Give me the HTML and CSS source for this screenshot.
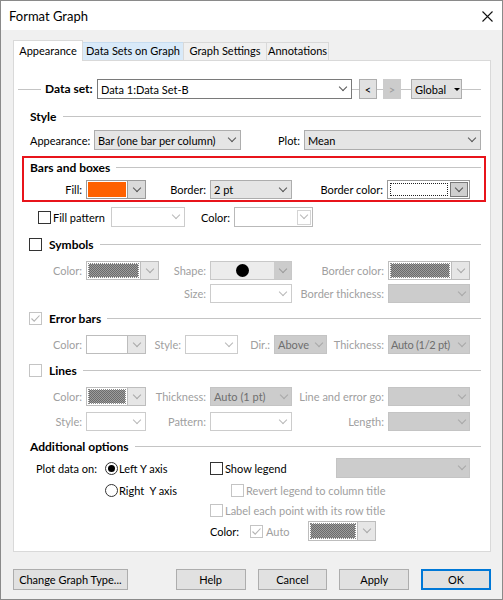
FILE: index.html
```html
<!DOCTYPE html>
<html lang="en">
<head>
    <meta charset="UTF-8">
    <title>Format Graph</title>
    <link rel="stylesheet" href="styles.css">
</head>
<body>
<div class="window">
    <div class="titlebar">
        <span class="title">Format Graph</span>
        <svg class="close" width="11" height="11" viewBox="0 0 11 11"><path d="M0.5 0.5 L10.5 10.5 M10.5 0.5 L0.5 10.5" stroke="#111" stroke-width="1.1"/></svg>
    </div>
    <div class="body">
        <div class="tabs">
            <div class="tab active t1">Appearance</div>
            <div class="tab hover t2">Data Sets on Graph</div>
            <div class="tab t3">Graph Settings</div>
            <div class="tab t4">Annotations</div>
        </div>
        <div class="panel">
            <div class="ds-row">
                <span class="ds-label">Data set:</span>
                <div class="combo edit ds-combo"><span class="val">Data 1:Data Set-B</span><span class="arr"></span></div>
                <span class="navbtn prev">&lt;</span>
                <span class="navbtn next off">&gt;</span>
                <span class="navbtn global">Global <i class="tri"></i></span>
            </div>

            <div class="group-head sp-style">Style</div>
            <div class="row sp-appear">
                <span class="lbl l-appear">Appearance:</span>
                <div class="combo list w-appear"><span class="val">Bar (one bar per column)</span><span class="arr"></span></div>
                <span class="lbl right l-plot">Plot:</span>
                <div class="combo list w-plot"><span class="val">Mean</span><span class="arr"></span></div>
            </div>

            <div class="highlight">
                <div class="group-head">Bars and boxes</div>
                <div class="row fill-row">
                    <span class="lbl right c1">Fill:</span>
                    <div class="swatch w-sm"><span class="color orange"></span><span class="sbtn"><span class="arr"></span></span></div>
                    <span class="lbl right c2">Border:</span>
                    <div class="combo list w-std"><span class="val">2 pt</span><span class="arr"></span></div>
                    <span class="lbl right c3f">Border color:</span>
                    <div class="swatch w-bc"><span class="color focus"></span><span class="sbtn dark"><span class="arr"></span></span></div>
                </div>
            </div>

            <div class="row sp-pattern">
                <span class="fp-label"><span class="check"></span><span class="fp-text">Fill pattern</span></span>
                <div class="combo blank w-fp"><span class="val"></span><span class="arr"></span></div>
                <span class="lbl right fp-color">Color:</span>
                <div class="combo blank soft w-fpc"><span class="val"></span><span class="arr boxed"></span></div>
            </div>

            <div class="group-head with-check sp-9"><span class="check"></span>Symbols</div>
            <div class="row small sp-9 muted">
                <span class="lbl right c1">Color:</span>
                <div class="swatch off w-md"><span class="color hatch"></span><span class="sbtn"><span class="arr"></span></span></div>
                <span class="lbl right c2n">Shape:</span>
                <div class="combo shape w-std"><span class="val"><i class="dot"></i></span><span class="arr grey"></span></div>
                <span class="lbl right c3">Border color:</span>
                <div class="swatch off w-std"><span class="color hatch"></span><span class="sbtn"><span class="arr"></span></span></div>
            </div>
            <div class="row small sp-4 muted">
                <span class="lbl right c-size">Size:</span>
                <div class="combo blank w-std"><span class="val"></span><span class="arr"></span></div>
                <span class="lbl right c3">Border thickness:</span>
                <div class="combo dis w-std"><span class="val"></span><span class="arr"></span></div>
            </div>

            <div class="group-head with-check sp-7"><span class="check off on"><svg width="11" height="11" viewBox="0 0 11 11"><path d="M1.5 5.5 L4.2 8.2 L9.5 2.5" fill="none" stroke="#b4b4b4" stroke-width="1.1"/></svg></span>Error bars</div>
            <div class="row small sp-9 muted">
                <span class="lbl right c1">Color:</span>
                <div class="swatch off w-sm"><span class="color"></span><span class="sbtn"><span class="arr"></span></span></div>
                <span class="lbl right e-style">Style:</span>
                <div class="combo blank w-xs"><span class="val"></span><span class="arr"></span></div>
                <span class="lbl right e-dir">Dir.:</span>
                <div class="combo dis w-xs"><span class="val">Above</span><span class="arr"></span></div>
                <span class="lbl right e-thick">Thickness:</span>
                <div class="combo dis w-std"><span class="val fit">Auto (1/2 pt)</span><span class="arr"></span></div>
            </div>

            <div class="group-head with-check sp-8"><span class="check off"></span>Lines</div>
            <div class="row small sp-9 muted">
                <span class="lbl right c1">Color:</span>
                <div class="swatch off w-sm"><span class="color hatch"></span><span class="sbtn"><span class="arr"></span></span></div>
                <span class="lbl right c2">Thickness:</span>
                <div class="combo dis w-std"><span class="val">Auto (1 pt)</span><span class="arr"></span></div>
                <span class="lbl right c3">Line and error go:</span>
                <div class="combo dis w-std"><span class="val"></span><span class="arr"></span></div>
            </div>
            <div class="row small sp-6 muted">
                <span class="lbl right c1">Style:</span>
                <div class="combo blank w-sm"><span class="val"></span><span class="arr"></span></div>
                <span class="lbl right c2">Pattern:</span>
                <div class="combo blank w-std"><span class="val"></span><span class="arr"></span></div>
                <span class="lbl right c3">Length:</span>
                <div class="combo dis w-std"><span class="val"></span><span class="arr"></span></div>
            </div>

            <div class="group-head sp-7">Additional options</div>
            <div class="row sp-4">
                <span class="lbl plot-lbl">Plot data on:</span>
                <span class="radio on"></span>
                <span class="lbl opt-left">Left Y axis</span>
                <span class="check"></span>
                <span class="lbl opt-legend">Show legend</span>
                <div class="combo dis w-legend"><span class="val"></span><span class="arr"></span></div>
            </div>
            <div class="row line sp-3">
                <span class="gap75"></span>
                <span class="radio"></span>
                <span class="lbl opt-right">Right&nbsp; Y axis</span>
                <span class="check off"></span>
                <span class="lbl opt-note muted">Revert legend to column title</span>
            </div>
            <div class="row line sp-2">
                <span class="gap180"></span>
                <span class="check off"></span>
                <span class="lbl opt-note muted">Label each point with its row title</span>
            </div>
            <div class="row sp-2">
                <span class="gap180"></span>
                <span class="lbl opt-color">Color:</span>
                <span class="check off on"><svg width="11" height="11" viewBox="0 0 11 11"><path d="M1.5 5.5 L4.2 8.2 L9.5 2.5" fill="none" stroke="#b4b4b4" stroke-width="1.1"/></svg></span>
                <span class="lbl opt-auto muted">Auto</span>
                <div class="swatch off w-auto"><span class="color hatch"></span><span class="sbtn"><span class="arr"></span></span></div>
            </div>
        </div>

        <div class="footer">
            <span class="btn change">Change Graph Type...</span>
            <span class="btn help">Help</span>
            <span class="btn">Cancel</span>
            <span class="btn">Apply</span>
            <span class="btn default">OK</span>
        </div>
    </div>
</div>
</body>
</html>
```

FILE: styles.css
```css
* { box-sizing: border-box; }
body {
    margin: 0;
    font-family: Lato, "Noto Sans", sans-serif;
    font-size: 11px;
    color: #000;
}
.window {
    width: 503px;
    height: 600px;
    border: 1px solid #8a8a8a;
    background: #f0f0f0;
}
.titlebar {
    height: 29px;
    background: #fff;
    display: flex;
    align-items: center;
    justify-content: space-between;
    padding: 0 9px 0 8px;
}
.title { font-size: 13px; }
.close { margin-top: 1px; }

.body { padding: 10px 11px 9px 12px; }

/* tabs */
.tabs { display: flex; align-items: flex-end; height: 20px; }
.tab {
    height: 18px;
    border: 1px solid #d9d9d9;
    border-bottom: none;
    background: #f0f0f0;
    line-height: 16px;
    text-align: center;
    margin-right: -1px;
}
.tab.active {
    height: 21px;
    line-height: 19px;
    background: #fff;
    margin-bottom: -1px;
    position: relative;
    z-index: 1;
}
.tab.hover { background: #d9eaf9; border-color: #c6dcf0; }
.t1 { width: 70px; }
.t2 { width: 102px; }
.t3 { width: 84px; }
.t4 { width: 63px; }

.panel {
    height: 492px;
    background: #fff;
    border: 1px solid #d9d9d9;
}

/* data set row */
.ds-row {
    display: flex;
    align-items: center;
    height: 20px;
    margin: 18px 0 0 4px;
    width: 463px;
    background: linear-gradient(#c4c4c4, #c4c4c4) center / 100% 1px no-repeat;
}
.ds-label {
    width: 56px;
    margin-left: 23px;
    padding-left: 4px;
    background: #fff;
    font-weight: bold;
    font-size: 12px;
    height: 20px;
    line-height: 20px;
}
.ds-combo { width: 255px; }
.navbtn {
    height: 20px;
    border: 1px solid #adadad;
    background: #e1e1e1;
    display: flex;
    align-items: center;
    justify-content: center;
}
.prev { width: 18px; margin-left: 7px; }
.next { width: 18px; margin-left: 6px; }
.navbtn.off { background: #cccccc; border-color: #cccccc; color: #9a9a9a; }
.global { width: 51px; margin-left: 10px; justify-content: flex-start; padding-left: 3px; gap: 8px; }
.tri {
    border-left: 3px solid transparent;
    border-right: 3px solid transparent;
    border-top: 3px solid #000;
}

/* group headings */
.group-head {
    display: flex;
    align-items: center;
    height: 16px;
    margin: 0 9px 0 16px;
    font-weight: bold;
    font-size: 12px;
}
.group-head::after {
    content: "";
    flex: 1;
    height: 1px;
    background: #c4c4c4;
    margin-left: 6px;
}
.group-head.with-check .check { margin: 0 7px 0 -1px; }

/* rows */
.row {
    display: flex;
    align-items: center;
    height: 20px;
    margin: 0 9px 0 16px;
}
.row.small { height: 19px; }
.row.line { height: 18px; }
.lbl { white-space: nowrap; }
.lbl.right { text-align: right; padding-right: 4px; }
.muted, .muted .lbl { color: #a0a0a0; }

.sp-style { margin-top: 9px; }
.sp-appear { margin-top: 6px; }
.sp-pattern { margin-top: 5px; }
.sp-9 { margin-top: 9px; }
.sp-8 { margin-top: 8px; }
.sp-7 { margin-top: 7px; }
.sp-6 { margin-top: 6px; }
.sp-4 { margin-top: 4px; }
.sp-3 { margin-top: 3px; }
.sp-2 { margin-top: 2px; }

.l-appear { width: 64px; }
.l-plot { width: 63px; }
.c1 { width: 56px; }
.c2 { width: 64px; }
.c2n { width: 51px; }
.c3 { width: 96px; }
.c3f { width: 95px; }
.c-size { width: 180px; }
.e-style { width: 39px; }
.e-dir { width: 36px; }
.e-thick { width: 61px; }
.fp-label { width: 81px; display: flex; align-items: center; padding-left: 8px; }
.fp-text { margin-left: 2px; }
.fp-color { width: 49px; }

/* highlight box */
.highlight {
    margin: 6px 4px 0 8px;
    border: 2px solid #e8141b;
    padding: 1px 3px 1px 6px;
}
.highlight .group-head, .highlight .row { margin: 0; }
.highlight .fill-row { margin-top: 5px; height: 19px; }

/* combos */
.combo {
    display: flex;
    align-items: center;
    height: 100%;
    border: 1px solid #adadad;
    background: #fff;
}
.combo .val { flex: 1; padding-left: 3px; white-space: nowrap; overflow: hidden; }
.combo .val.fit { padding-left: 2px; letter-spacing: -0.3px; }
.combo.edit { border-color: #7a7a7a; }
.combo.list { background: #e5e5e5; }
.combo.blank { border-color: #cccccc; }
.combo.blank .arr { color: #b8b8b8; }
.combo.soft { border-color: #b9b9b9; }
.combo.dis { background: #cccccc; border-color: #c4c4c4; color: #6e6e6e; }
.combo.dis .arr { color: #a8a8a8; width: 15px; }
.combo.shape { background: #ececec; border-color: #c8c8c8; }
.combo.shape .val { display: flex; justify-content: center; padding-left: 0; }
.dot { width: 13px; height: 13px; border-radius: 50%; background: #000; }
.arr {
    width: 17px;
    height: 100%;
    display: flex;
    align-items: center;
    justify-content: center;
    color: #555;
    flex: none;
}
.arr::after {
    content: "";
    width: 5px;
    height: 5px;
    border-right: 1px solid currentColor;
    border-bottom: 1px solid currentColor;
    transform: translateY(-2px) rotate(45deg);
}
.arr.grey { background: #cccccc; color: #9a9a9a; }
.arr.boxed { border: 1px solid #d4d4d4; height: 15px; margin-right: 1px; width: 14px; }

.w-appear { width: 147px; }
.w-plot { width: 177px; }
.w-sm { width: 60px; }
.w-md { width: 73px; }
.w-std { width: 82px; }
.w-bc { width: 83px; }
.w-xs { width: 53px; }
.w-fp { width: 74px; }
.w-fpc { width: 79px; }
.w-legend { width: 134px; }
.w-auto { width: 68px; }

/* colour swatches */
.swatch {
    display: flex;
    height: 100%;
    border: 1px solid #9a9a9a;
    background: #fff;
}
.swatch .color { flex: 1; margin: 2px; }
.swatch .sbtn {
    width: 18px;
    border-left: 1px solid #9a9a9a;
    background: #dadada;
    display: flex;
}
.swatch .sbtn .arr { width: 100%; }
.swatch .sbtn.dark { border: 1px solid #7a7a7a; background: #d0d0d0; margin: 1px 1px 1px 0; }
.swatch.off { border-color: #bdbdbd; }
.swatch.off .sbtn { background: #e6e6e6; border-left-color: #bdbdbd; }
.swatch.off .sbtn .arr { color: #a8a8a8; }
.orange { background: #ff6100; margin: 1px !important; }
.focus { border: 1px dotted #222; }
.hatch {
    background: repeating-conic-gradient(#6c6c6c 0 25%, #9c9c9c 0 50%) 0 0 / 2px 2px;
    outline: 1px dotted #888;
}

/* checks and radios */
.check {
    width: 13px;
    height: 13px;
    border: 1px solid #333;
    background: #fff;
    flex: none;
    display: flex;
    align-items: center;
    justify-content: center;
}
.check.off { border-color: #c4c4c4; }
.radio {
    width: 13px;
    height: 13px;
    border: 1px solid #333;
    border-radius: 50%;
    background: #fff;
    flex: none;
    display: flex;
    align-items: center;
    justify-content: center;
}
.radio.on::after {
    content: "";
    width: 7px;
    height: 7px;
    border-radius: 50%;
    background: #000;
}

/* additional options */
.plot-lbl { width: 69px; margin-left: 6px; }
.opt-left { width: 91px; margin-left: 1px; }
.opt-legend { width: 111px; margin-left: 2px; }
.opt-right { width: 112px; margin-left: 1px; }
.opt-note { margin-left: 2px; }
.opt-color { width: 40px; }
.opt-auto { width: 42px; margin-left: 3px; }
.gap75 { width: 75px; flex: none; }
.gap180 { width: 180px; flex: none; }

/* footer buttons */
.footer { display: flex; margin-top: 17px; }
.btn {
    height: 21px;
    width: 70px;
    border: 1px solid #adadad;
    background: #e1e1e1;
    display: flex;
    align-items: center;
    justify-content: center;
    margin-left: 12px;
}
.btn.change { width: 115px; margin-left: 0; }
.btn.help { margin-left: 48px; }
.btn.default { border-color: #0078d7; box-shadow: inset 0 0 0 1px #0078d7; }
```
